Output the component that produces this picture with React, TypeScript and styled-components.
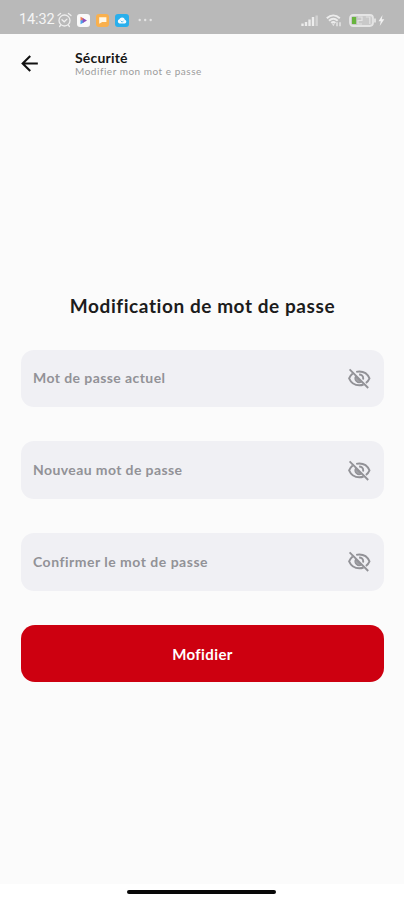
import React from 'react';
import styled, { createGlobalStyle } from 'styled-components';
import { MdArrowBack } from 'react-icons/md';

const GlobalStyle = createGlobalStyle`
  *, *::before, *::after { box-sizing: border-box; }
  body { margin: 0; background: #fff; font-family: Lato, "Open Sans", sans-serif; }
`;

const Screen = styled.div`
  display: flex;
  flex-direction: column;
  width: 404px;
  height: 900px;
  background: #fbfbfb;
`;

const StatusBar = styled.div`
  display: flex;
  align-items: flex-start;
  justify-content: space-between;
  height: 34px;
  padding: 12px 19px 0 19px;
  background: #b9b9b9;
`;

const StatusGroup = styled.div<{ $gap: number }>`
  display: flex;
  align-items: center;
  height: 16px;
  gap: ${(p) => p.$gap}px;
`;

const Clock = styled.span`
  width: 34px;
  font: 400 14.5px/16px Roboto, sans-serif;
  letter-spacing: -0.1px;
  white-space: nowrap;
  color: #f5f5f5;
`;

const AppBar = styled.header`
  display: flex;
  align-items: center;
  height: 58px;
  padding-left: 17px;
`;

const BackButton = styled.button`
  display: flex;
  width: 25px;
  height: 25px;
  padding: 0;
  border: 0;
  background: none;
  color: #111;
`;

const Titles = styled.div`
  margin-left: 33px;
  padding-top: 1px;
  white-space: nowrap;
`;

const PageName = styled.div`
  font-size: 14px;
  line-height: 15px;
  font-weight: 700;
  letter-spacing: 0.2px;
  color: #161616;
`;

const PageHint = styled.div`
  font-size: 10px;
  line-height: 13px;
  letter-spacing: 0.52px;
  color: #9b9b9b;
`;

const Form = styled.main`
  display: flex;
  flex: 1;
  flex-direction: column;
  padding: 201px 20px 0 21px;
`;

const Heading = styled.h1`
  margin: 0 0 30.6px;
  font-size: 19px;
  line-height: 26px;
  font-weight: 700;
  letter-spacing: 0.57px;
  text-align: center;
  white-space: nowrap;
  color: #1c1c1c;
`;

const Field = styled.label`
  display: flex;
  align-items: center;
  justify-content: space-between;
  height: 57.7px;
  margin-bottom: 34px;
  padding: 0 12px;
  border-radius: 13px;
  background: #f0f0f4;
  color: #929297;
`;

const Placeholder = styled.span<{ $spacing: number }>`
  font-size: 14px;
  line-height: 20px;
  font-weight: 700;
  letter-spacing: ${(p) => p.$spacing}px;
  white-space: nowrap;
`;

const SubmitButton = styled.button`
  height: 57.7px;
  padding: 0;
  border: 0;
  border-radius: 14px;
  background: #cd0010;
  color: #fff;
  font: 700 15px/20px Lato, sans-serif;
  letter-spacing: 0.4px;
`;

const GestureArea = styled.footer`
  display: flex;
  justify-content: center;
  height: 16px;
  padding: 6px 2px 0 0;
  background: #fff;
`;

const GestureBar = styled.div`
  width: 149px;
  height: 4px;
  border-radius: 2px;
  background: #080808;
`;

const AlarmIcon = () => (
  <svg width="15" height="16" viewBox="0 0 15 16" fill="none" stroke="#eeeeee" strokeWidth="1.3" strokeLinecap="round">
    <circle cx="7.5" cy="8.5" r="5.5" />
    <path d="M1 3.6 3.6 1.5M14 3.6 11.4 1.5M5 7.8l2.2 2 2.8-2.7M3.6 13.2l-1 1.3M11.4 13.2l1 1.3" />
  </svg>
);

const PlayAppIcon = () => (
  <svg width="13" height="13" viewBox="0 0 13 13">
    <rect width="13" height="13" rx="3" fill="#fafafa" />
    <path d="M3.5 2.8v4h3V4.2Z" fill="#f08058" />
    <path d="M3.5 6.3v4l3.2-1.9V6.3Z" fill="#4aa3ec" />
    <path d="M5.7 4 10 6.5 5.7 9Z" fill="#8b50bd" />
  </svg>
);

const ChatAppIcon = () => (
  <svg width="13" height="13" viewBox="0 0 13 13">
    <rect width="13" height="13" rx="3" fill="#f9b04d" />
    <path d="M3.2 3.2h7.2v4.7H6.2L3.2 9.7Z" fill="#fff8e8" />
  </svg>
);

const CloudAppIcon = () => (
  <svg width="14" height="13" viewBox="0 0 14 13">
    <rect width="14" height="13" rx="3" fill="#29afec" />
    <path d="M4.5 9.5a2.2 2.2 0 0 1-.2-4.2 3 3 0 0 1 5.6.4 2 2 0 0 1 .1 3.8Z" fill="#f5fcff" />
    <path d="m5.7 6.7 1.5 1.5 1.4-1.5" fill="none" stroke="#54bceb" />
  </svg>
);

const MoreDots = () => (
  <svg width="15" height="4" viewBox="0 0 15 4" fill="#e4e4e4">
    <circle cx="1.7" cy="2" r="1.2" />
    <circle cx="7.2" cy="2" r="1.2" />
    <circle cx="12.7" cy="2" r="1.2" />
  </svg>
);

const SignalIcon = () => (
  <svg width="18" height="13" viewBox="0 0 18 13" stroke="#ececec" strokeWidth="2.4">
    <path d="M1.5 12V9.5M5 12V8M8.5 12V5.5M12 12V3" />
    <path d="M15.7 12V1.5" stroke="#d2d2d2" />
  </svg>
);

const WifiIcon = () => (
  <svg width="16" height="13" viewBox="0 0 16 13" fill="none" stroke="#ececec" strokeWidth="2">
    <path d="M.8 4.2c4-3.6 9-3.6 13 0M3 6.7c2.7-2.5 6-2.5 8.7 0M5.3 9.1c1.3-1.2 2.8-1.2 4.1 0" />
    <path d="M6 10.2h2.6L7.3 12Z" fill="#ececec" stroke="none" />
    <path d="M11 8.3v4M14 8.3v4" strokeWidth="1.3" />
  </svg>
);

const BatteryIcon = () => (
  <svg width="36" height="13" viewBox="0 0 36 13">
    <rect x="1" y="1" width="23" height="11" rx="3.2" fill="#c9c9c9" stroke="#e5e5e5" strokeWidth="1.8" />
    <path d="M3 3h4.2v7H3Z" fill="#68b43e" />
    <path d="M9 3h4v3.5H9V10h4M16.8 3h4v7" fill="none" stroke="#e3e3e3" strokeWidth="1.2" />
    <path d="M26 4.5v4" stroke="#e5e5e5" strokeWidth="1.8" />
    <path d="M33.5 1 29.5 7.3h2.3L30.7 12l4.6-6.8h-2.5Z" fill="#f1f1f1" />
  </svg>
);

const HiddenEyeIcon = () => (
  <svg width="25" height="25" viewBox="0 0 25 25" fill="none" stroke="#929297" strokeWidth="1.9">
    <path d="M9.2 5.9C10.2 5.6 11.2 5.5 12.3 5.5c4.6 0 8.4 2.6 10.2 6.9-.8 1.9-2 3.5-3.6 4.7" />
    <path d="M5.7 7.4C4.1 8.6 2.9 10.4 2.1 12.4c1.8 4.3 5.6 6.9 10.2 6.9 1.5 0 3-.3 4.3-.8" />
    <path d="M12.1 8.5c2.3 0 4.1 1.6 4.1 3.8 0 .5-.1.9-.2 1.2" />
    <path d="M8.6 10.3a4.2 4.2 0 0 0 5.7 5.7Z" fill="#a1a1a6" strokeWidth="1.2" />
    <path d="M2.6 3.4 21.2 22" />
  </svg>
);

const fields = [
  { label: 'Mot de passe actuel', spacing: 0.42 },
  { label: 'Nouveau mot de passe', spacing: 0.4 },
  { label: 'Confirmer le mot de passe', spacing: 0.5 },
];

export default function App() {
  return (
    <>
      <GlobalStyle />
      <Screen>
        <StatusBar>
          <StatusGroup $gap={9}>
            <StatusGroup $gap={6}>
              <StatusGroup $gap={5}>
                <StatusGroup $gap={4}>
                  <Clock>14:32</Clock>
                  <AlarmIcon />
                </StatusGroup>
                <PlayAppIcon />
              </StatusGroup>
              <ChatAppIcon />
              <CloudAppIcon />
            </StatusGroup>
            <MoreDots />
          </StatusGroup>
          <StatusGroup $gap={7}>
            <SignalIcon />
            <WifiIcon />
            <BatteryIcon />
          </StatusGroup>
        </StatusBar>
        <AppBar>
          <BackButton aria-label="Retour">
            <MdArrowBack size={25} />
          </BackButton>
          <Titles>
            <PageName>Sécurité</PageName>
            <PageHint>Modifier mon mot e passe</PageHint>
          </Titles>
        </AppBar>
        <Form>
          <Heading>Modification de mot de passe</Heading>
          {fields.map((f) => (
            <Field key={f.label}>
              <Placeholder $spacing={f.spacing}>{f.label}</Placeholder>
              <HiddenEyeIcon />
            </Field>
          ))}
          <SubmitButton>Mofidier</SubmitButton>
        </Form>
        <GestureArea>
          <GestureBar />
        </GestureArea>
      </Screen>
    </>
  );
}
